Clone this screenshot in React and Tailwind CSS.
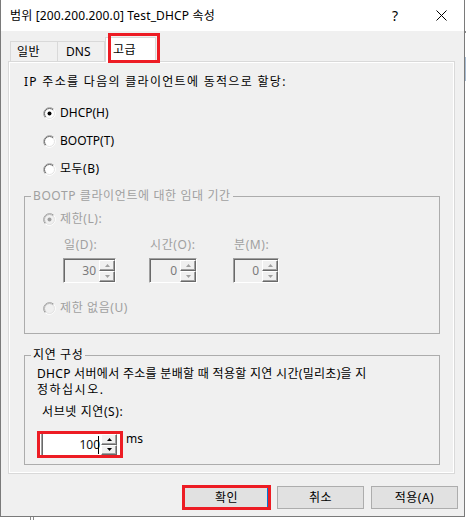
import React from "react";

function Radio({ checked, disabled }) {
  return (
    <svg width="13" height="13" viewBox="0 0 13 13" className="shrink-0">
      <circle cx="6.5" cy="6.5" r="6" fill={disabled ? "#f0f0f0" : "#ffffff"} />
      <path d="M2.26 10.74 A6 6 0 0 1 10.74 2.26" stroke="#a0a0a0" fill="none" />
      <path d="M10.74 2.26 A6 6 0 0 1 2.26 10.74" stroke="#ffffff" fill="none" />
      <path d="M2.96 10.04 A5 5 0 0 1 10.04 2.96" stroke={disabled ? "#b8b8b8" : "#696969"} fill="none" />
      <path d="M10.04 2.96 A5 5 0 0 1 2.96 10.04" stroke="#e3e3e3" fill="none" />
      {checked && <circle cx="6.5" cy="6.5" r="2" fill={disabled ? "#a0a0a0" : "#000000"} />}
    </svg>
  );
}

function Arrow({ up, color }) {
  return (
    <svg width="5" height="3" viewBox="0 0 5 3">
      {up ? <path d="M2.5 0 L5 3 L0 3 Z" fill={color} /> : <path d="M0 0 L5 0 L2.5 3 Z" fill={color} />}
    </svg>
  );
}

function SpinButtons({ color }) {
  return (
    <div className="flex flex-col w-[16px] shrink-0">
      <div className="flex items-center justify-center h-[11px] bg-[#f0f0f0] border border-t-white border-l-white border-r-[#696969] border-b-[#696969] shadow-[inset_-1px_-1px_0_#a0a0a0]">
        <Arrow up color={color} />
      </div>
      <div className="flex items-center justify-center h-[11px] bg-[#f0f0f0] border border-t-white border-l-white border-r-[#696969] border-b-[#696969] shadow-[inset_-1px_-1px_0_#a0a0a0]">
        <Arrow color={color} />
      </div>
    </div>
  );
}

function DisabledSpin({ className, value }) {
  return (
    <div
      className={
        "flex h-[25px] border border-t-[#a0a0a0] border-l-[#a0a0a0] border-r-white border-b-white shadow-[inset_1px_1px_0_#696969] bg-[#f0f0f0] pt-[1px] pl-[1px] " +
        className
      }
    >
      <div className="flex-1 text-right pr-[3px] leading-[22px] text-[#7a7a7a]">{value}</div>
      <SpinButtons color="#a0a0a0" />
    </div>
  );
}

export default function App() {
  return (
    <div className="relative w-[466px] h-[520px] bg-white overflow-hidden font-['Noto_Sans','Noto_Sans_CJK_KR',sans-serif] text-[12px] leading-[16px] text-black">
      <div className="flex flex-col w-[465px] h-[517px] border-l border-r border-b border-[#7a7a7a] bg-[#f0f0f0]">
        {/* Title bar */}
        <div className="flex items-center h-[31px] bg-white shrink-0">
          <span className="ml-[9px] tracking-[0.15px]">범위 [200.200.200.0] Test_DHCP 속성</span>
          <span className="ml-auto w-[46px] text-center text-[14px]">?</span>
          <span className="w-[46px] flex items-center justify-center">
            <svg width="11" height="11" viewBox="0 0 11 11">
              <path d="M0.5 0.5 L10.5 10.5 M10.5 0.5 L0.5 10.5" stroke="#000" strokeWidth="1" />
            </svg>
          </span>
        </div>

        {/* Tabs */}
        <div className="flex items-end h-[30px] pl-[9px] shrink-0">
          <div className="h-[20px] w-[48px] border border-b-0 border-[#d9d9d9] pl-[6px] leading-[20px] tracking-[0.5px]">일반</div>
          <div className="-ml-px h-[20px] w-[48px] border border-b-0 border-[#d9d9d9] pl-[8px] leading-[20px]">DNS</div>
          <div className="relative z-10 -mb-px h-[25px] w-[51px] border border-b-0 border-[#d9d9d9] bg-white pl-[7px] pt-[4px] tracking-[0.5px]">
            고급
            <div className="absolute left-[2px] -top-[5px] w-[52px] h-[30px] border-[3px] border-[#ed1c24]"></div>
          </div>
        </div>

        {/* Panel */}
        <div className="ml-[7px] w-[447px] h-[413px] border border-[#d9d9d9] shadow-[inset_1px_1px_0_#fff,inset_-1px_-1px_0_#fff] pl-[15px] pr-[14px] pt-[12px] shrink-0">
          <div className="tracking-[1.3px]">IP 주소를 다음의 클라이언트에 동적으로 할당:</div>
          <div className="flex flex-col gap-[12px] mt-[15px] pl-[19px]">
            <div className="flex items-center gap-[4px]">
              <Radio checked />
              <span>DHCP(H)</span>
            </div>
            <div className="flex items-center gap-[4px]">
              <Radio />
              <span>BOOTP(T)</span>
            </div>
            <div className="flex items-center gap-[4px]">
              <Radio />
              <span className="tracking-[0.5px]">모두(B)</span>
            </div>
          </div>

          {/* Group 1 */}
          <div className="relative mt-[19px] border border-[#acacac] pt-[14px] pb-[17px] pl-[18px] text-[#a0a0a0] tracking-[0.6px]">
            <span className="absolute left-[6px] -top-[9px] px-[2px] bg-[#f0f0f0]">BOOTP 클라이언트에 대한 임대 기간</span>
            <div className="flex items-center gap-[4px]">
              <Radio checked disabled />
              <span>제한(L):</span>
            </div>
            <div className="flex mt-[10px] pl-[20px]">
              <div className="w-[86px]">
                <div className="pl-[1px]">일(D):</div>
                <DisabledSpin className="w-[53px] mt-[5px] tracking-normal" value="30" />
              </div>
              <div className="w-[84px]">
                <div className="pl-[1px]">시간(O):</div>
                <DisabledSpin className="w-[48px] mt-[5px] tracking-normal" value="0" />
              </div>
              <div className="w-[84px]">
                <div className="pl-[1px]">분(M):</div>
                <DisabledSpin className="w-[46px] mt-[5px] tracking-normal" value="0" />
              </div>
            </div>
            <div className="flex items-center gap-[4px] mt-[17px]">
              <Radio disabled />
              <span>제한 없음(U)</span>
            </div>
          </div>

          {/* Group 2 */}
          <div className="relative mt-[21px] border border-[#acacac] pt-[10px] pb-[6px] pl-[12px]">
            <span className="absolute left-[6px] -top-[9px] px-[2px] bg-[#f0f0f0] tracking-[0.6px]">지연 구성</span>
            <div className="whitespace-nowrap tracking-[0.3px]">
              DHCP 서버에서 주소를 분배할 때 적용할 지연 시간(밀리초)을 지
              <br />
              <span className="tracking-[1.5px]">정하십시오.</span>
            </div>
            <div className="mt-[6px] pl-[5px] tracking-[0.6px]">서브넷 지연(S):</div>
            <div className="flex items-start mt-[11px]">
              <div className="flex w-[86px] h-[27px] border-[3px] border-[#ed1c24] bg-white">
                <div className="ml-[1px] w-px h-full bg-[#a0a0a0]"></div>
                <div className="w-px h-full bg-[#696969]"></div>
                <div className="flex-1 flex items-center justify-end pr-[2px]">
                  <span className="leading-[21px] text-[#111]">100</span>
                  <span className="-ml-[2px] w-px h-[18px] bg-black"></span>
                </div>
                <SpinButtons color="#000000" />
                <div className="w-[3px]"></div>
              </div>
              <span className="ml-[3px]">ms</span>
            </div>
          </div>
        </div>

        {/* Buttons */}
        <div className="flex justify-end gap-[7px] pr-[6px] mt-[12px] shrink-0 tracking-[0.5px]">
          <div className="relative w-[87px] h-[23px] border border-[#adadad] bg-[#e1e1e1] text-center leading-[21px] shadow-[inset_-2px_0_0_#0078d7]">
            확인
            <div className="absolute -left-[2px] -top-[2px] -right-[2px] -bottom-[2px] border-[3px] border-[#ed1c24]"></div>
          </div>
          <div className="w-[87px] h-[23px] border border-[#adadad] bg-[#e1e1e1] text-center leading-[21px]">취소</div>
          <div className="w-[87px] h-[23px] border border-[#adadad] bg-[#e1e1e1] text-center leading-[21px]">적용(A)</div>
        </div>
      </div>

      {/* background behind window */}
      <div className="absolute left-[465px] top-[31px] w-px h-[2px] bg-[#8a8a8a]"></div>
      <div className="absolute left-[465px] top-[57px] w-px h-[24px] bg-[#a9bdd3]"></div>
      <div className="absolute left-[30px] top-[517px] w-px h-[3px] bg-[#8a8a8a]"></div>
      <div className="absolute left-[33px] top-[517px] w-px h-[3px] bg-[#8a8a8a]"></div>
    </div>
  );
}
